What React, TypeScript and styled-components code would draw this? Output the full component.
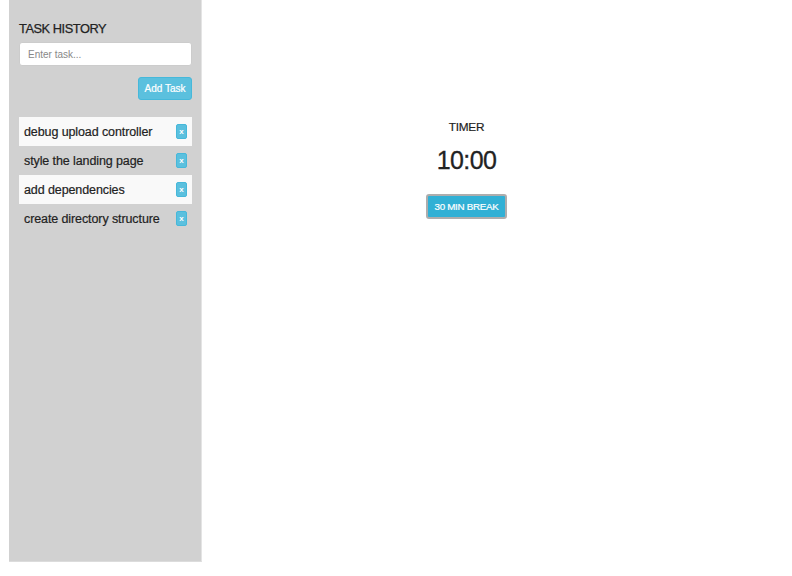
import React from "react";
import styled, { createGlobalStyle } from "styled-components";

const Global = createGlobalStyle`
  html, body { margin: 0; padding: 0; background: #fff; }
  body { font-family: "Liberation Sans", Arial, sans-serif; color: #333; }
  * { box-sizing: border-box; }
`;

const Page = styled.div`
  display: flex;
  width: 792px;
  height: 576px;
  padding-left: 9px;
`;

const Sidebar = styled.aside`
  width: 193px;
  height: 562px;
  background: #d1d1d1;
  border-right: 1px solid #e4e4e4;
  border-bottom: 1px solid #dcdcdc;
  padding: 21px 9px 0 10px;
  display: flex;
  flex-direction: column;
`;

const Heading = styled.h3`
  margin: 0 0 6px;
  font-size: 12.8px;
  font-weight: 400;
  letter-spacing: -0.45px;
  color: #222;
  line-height: 15px;
  -webkit-text-stroke: 0.25px #222;
`;

const Input = styled.input`
  width: 173px;
  height: 24px;
  border: 1px solid #ccc;
  border-radius: 3px;
  padding: 0 8px;
  font-family: inherit;
  font-size: 10px;
  color: #555;
  background: #fff;
  outline: none;
  &::placeholder { color: #888; }
`;

const ActionRow = styled.div`
  display: flex;
  justify-content: flex-end;
  width: 173px;
  margin-top: 11px;
`;

const AddButton = styled.button`
  height: 23px;
  width: 54px;
  padding: 0;
  border: 1px solid #46b8da;
  border-radius: 3px;
  background: #5bc0de;
  color: #fff;
  font-family: inherit;
  font-size: 10px;
  -webkit-text-stroke: 0.2px #fff;
`;

const TaskList = styled.ul`
  list-style: none;
  margin: 17px 0 0;
  padding: 0;
  width: 173px;
`;

const TaskRow = styled.li<{ $striped: boolean }>`
  display: flex;
  align-items: center;
  justify-content: space-between;
  height: 29px;
  padding: 0 5px 0 5px;
  background: ${(p) => (p.$striped ? "#f9f9f9" : "transparent")};
  font-size: 12.5px;
  letter-spacing: -0.1px;
  color: #222;
  -webkit-text-stroke: 0.2px #222;
`;

const RemoveButton = styled.button`
  width: 11px;
  height: 15px;
  padding: 0;
  border: 1px solid #46b8da;
  border-radius: 2px;
  background: #5bc0de;
  color: #fff;
  font-family: inherit;
  font-size: 8px;
  font-weight: 700;
  line-height: 12px;
  -webkit-text-stroke: 0;
`;

const Main = styled.main`
  flex: 1;
  display: flex;
  justify-content: center;
  padding-top: 120px;
  padding-right: 61px;
`;

const TimerBox = styled.section`
  display: flex;
  flex-direction: column;
  align-items: center;
`;

const TimerLabel = styled.div`
  font-size: 11.8px;
  letter-spacing: -0.2px;
  color: #222;
  line-height: 14px;
  -webkit-text-stroke: 0.2px #222;
`;

const TimerValue = styled.div`
  font-size: 25px;
  letter-spacing: -0.6px;
  color: #222;
  line-height: 30px;
  margin-top: 11px;
  -webkit-text-stroke: 0.3px #222;
`;

const BreakButton = styled.button`
  margin-top: 19px;
  height: 25px;
  padding: 0 7px;
  border: 2px solid #adadad;
  border-radius: 3px;
  background: #31b0d5;
  color: #fff;
  font-family: inherit;
  font-size: 9.8px;
  letter-spacing: -0.3px;
  -webkit-text-stroke: 0.2px #fff;
`;

const tasks = [
  "debug upload controller",
  "style the landing page",
  "add dependencies",
  "create directory structure",
];

export default function App() {
  return (
    <>
      <Global />
      <Page>
        <Sidebar>
          <Heading>TASK HISTORY</Heading>
          <Input placeholder="Enter task..." />
          <ActionRow>
            <AddButton>Add Task</AddButton>
          </ActionRow>
          <TaskList>
            {tasks.map((t, i) => (
              <TaskRow key={t} $striped={i % 2 === 0}>
                <span>{t}</span>
                <RemoveButton>x</RemoveButton>
              </TaskRow>
            ))}
          </TaskList>
        </Sidebar>
        <Main>
          <TimerBox>
            <TimerLabel>TIMER</TimerLabel>
            <TimerValue>10:00</TimerValue>
            <BreakButton>30 MIN BREAK</BreakButton>
          </TimerBox>
        </Main>
      </Page>
    </>
  );
}
